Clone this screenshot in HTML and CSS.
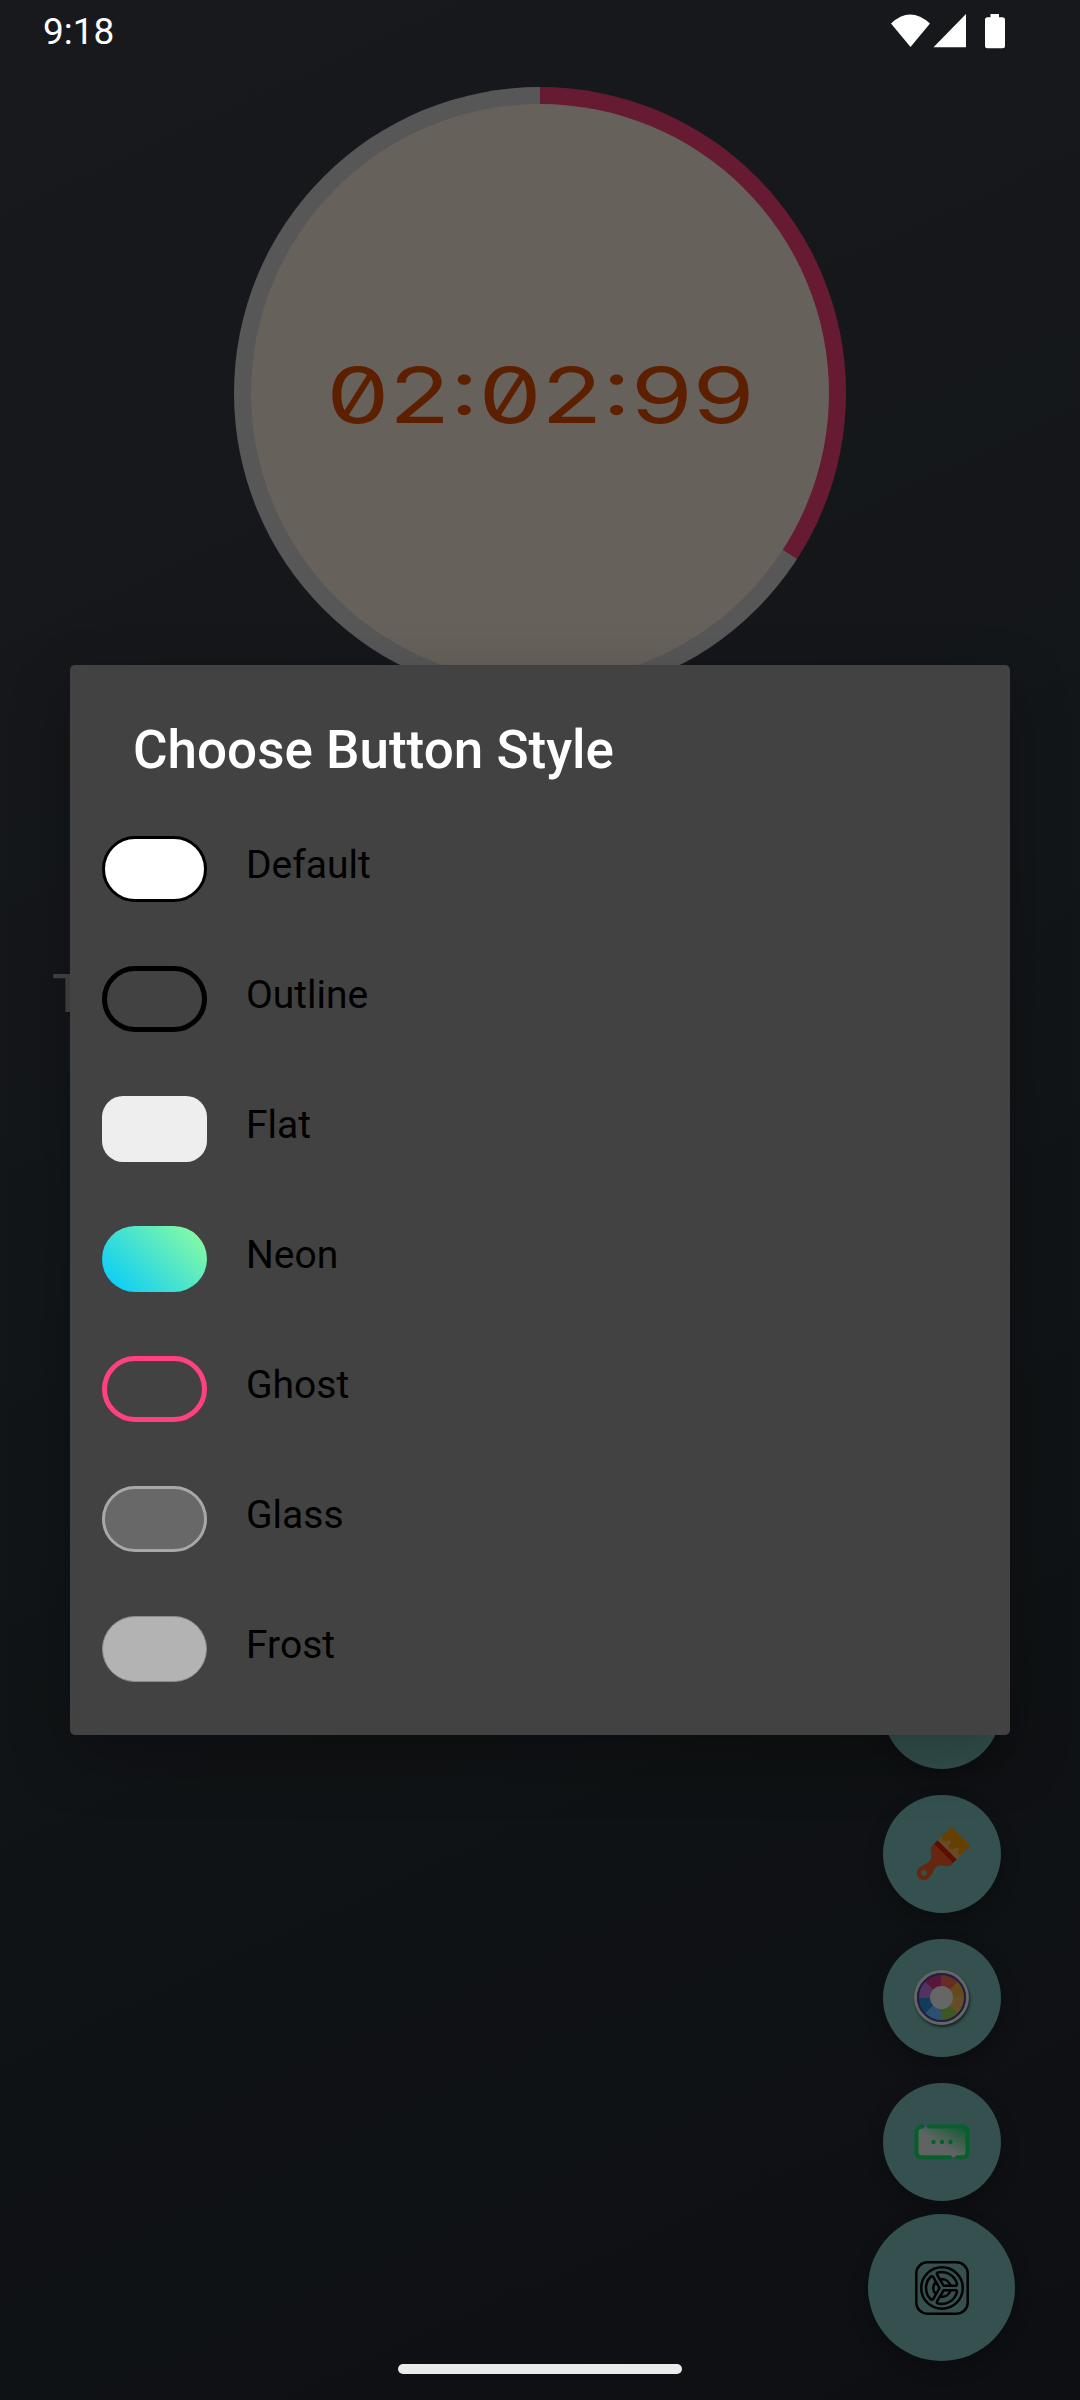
FILE: index.html
```html
<!DOCTYPE html>
<html lang="en">
<head>
<meta charset="utf-8">
<title>Timer</title>
<link rel="stylesheet" href="styles.css">
</head>
<body>
<div class="screen">
  <header class="status">
    <span class="clock">9:18</span>
    <svg class="status-icons" viewBox="0 0 118 36" width="118" height="36">
      <path d="M1 9.500Q20 -8.500 40 9.500L20.500 33Z"/>
      <path d="M43.500 33.200L76 0V33.200Z"/>
      <path d="M100.500 0h8.500v3.200h3.500q2.500 0 2.500 2.500v26q0 2.500-2.500 2.500h-15q-2.500 0-2.500-2.500v-26q0-2.500 2.500-2.500h3z"/>
    </svg>
  </header>
  <main class="content">
    <div class="dial">
      <div class="face"><span class="time">02:02:99</span></div>
    </div>
    <p class="behind">T</p>
  </main>

  <div class="fabs">
    <div class="fab"></div>
    <div class="fab">
      <svg viewBox="0 0 60 60" width="60" height="60">
        <g transform="translate(31 30) rotate(45)">
          <path fill="#66260f" d="M-13.500 -3H13.500V2C13.500 7 5 8 4.500 14C4 19 7 20 7 27C7 31 4 34 0 34S-7 31 -7 27C-7 20 -4 19 -4.500 14C-5 8 -13.500 7 -13.500 2Z"/>
          <circle cx="0" cy="27" r="2.800" fill="#34514f"/>
          <path fill="#5c0e00" d="M-13.500 -6H13.500V-1H-13.500Z"/>
          <path fill="#664b26" d="M-13.500 -18H13.500V-6H-13.500Z"/>
          <path fill="#664000" d="M-13.500 -25H13.500V-12C11 -9 9 -11 8.500 -14C7 -16 5 -15 4.500 -12C3 -7 -2 -8 -2 -12C-3 -16 -5 -15 -6 -13C-8 -8 -13 -9 -13.500 -14Z"/>
        </g>
      </svg>
    </div>
    <div class="fab">
      <div class="wheel"><div class="hub"></div></div>
    </div>
    <div class="fab">
      <svg viewBox="0 0 56 36" width="56" height="36">
        <defs><linearGradient id="card" x1="0" y1="1" x2="1" y2="0"><stop offset=".45" stop-color="#5f6462"/><stop offset="1" stop-color="#0b5a30"/></linearGradient></defs>
        <rect x="3" y="3" width="50" height="30" rx="5" fill="url(#card)"/>
        <path d="M8.500 2.500Q2.500 2.500 2.500 8.500V28Q2.500 33.300 8 33.300H36M43 33.300H48Q53.500 33.300 53.500 28V8Q53.500 2.500 48 2.500H15" fill="none" stroke="#07602b" stroke-width="4" stroke-linecap="round"/>
        <g fill="#07602b"><circle cx="19.500" cy="18" r="2.200"/><circle cx="28" cy="18" r="2.200"/><circle cx="36.500" cy="18" r="2.200"/></g>
      </svg>
    </div>
    <div class="fab fab-main">
      <svg viewBox="0 0 54 54" width="54" height="54" fill="none" stroke="#000" stroke-width="2.500" stroke-linejoin="round">
        <rect x="1.300" y="1.300" width="51.400" height="51.400" rx="11"/>
        <circle cx="27" cy="27" r="20.800"/>
        <path d="M28.500 24.700L22 13.500Q21.500 12 23 11.500C32 9.500 40 15 42 23Q42 24.700 40.500 24.700Z"/>
        <path d="M25 18.500C30 17.500 34 20 35.500 24.700"/>
        <path d="M28.500 29.300L22 40.500Q21.500 42 23 42.500C32 44.500 40 39 42 31Q42 29.300 40.500 29.300Z"/>
        <path d="M25 35.500C30 36.500 34 34 35.500 29.300"/>
        <path d="M24.500 27L18 15.700Q17 14.500 15.500 16C9.500 22 9.500 32 15.500 38Q17 39.500 18 38.300Z"/>
        <path d="M21 21C17.200 24.500 17.200 29.500 21 33"/>
      </svg>
    </div>
  </div>

  <div class="overlay">
    <section class="dialog">
      <h1 class="title">Choose Button Style</h1>
      <ul class="styles">
        <li class="row"><span class="swatch default"></span><span class="label">Default</span></li>
        <li class="row"><span class="swatch outline"></span><span class="label">Outline</span></li>
        <li class="row"><span class="swatch flat"></span><span class="label">Flat</span></li>
        <li class="row"><span class="swatch neon"></span><span class="label">Neon</span></li>
        <li class="row"><span class="swatch ghost"></span><span class="label">Ghost</span></li>
        <li class="row"><span class="swatch glass"></span><span class="label">Glass</span></li>
        <li class="row"><span class="swatch frost"></span><span class="label">Frost</span></li>
      </ul>
    </section>
  </div>
  <div class="handle"></div>
</div>
</body>
</html>
```
FILE: styles.css
```css
* { box-sizing: border-box; }
body { margin: 0; font-family: Roboto, sans-serif; }

.screen {
  position: relative;
  width: 1080px;
  height: 2400px;
  overflow: hidden;
  background: linear-gradient(155deg, #18191d 0%, #131619 45%, #0f1214 75%, #0e0f13 100%);
}

.status {
  display: flex;
  justify-content: space-between;
  align-items: flex-start;
  height: 87px;
  padding: 14px 72px 0 43px;
}
.clock { font-size: 37px; line-height: 35px; color: #fff; }
.status-icons { display: block; fill: #fff; }

.content { display: flex; flex-direction: column; }
.dial {
  align-self: center;
  width: 612px;
  height: 612px;
  padding: 17px;
  border-radius: 50%;
  background: conic-gradient(#661b33 0 122.800deg, #575757 122.900deg 360deg);
}
.face {
  display: flex;
  align-items: center;
  justify-content: center;
  height: 100%;
  border-radius: 50%;
  background: #66615a;
}
.time {
  padding-top: 4px;
  font-family: Inter, sans-serif;
  font-size: 77px;
  font-weight: 400;
  line-height: 80px;
  color: #5c1f00;
  font-feature-settings: "zero";
  white-space: nowrap;
  transform: scaleX(1.293);
}
.behind {
  margin: 264px 0 0 52px;
  font-size: 53px;
  line-height: 62px;
  color: #454545;
}

.fabs {
  position: absolute;
  top: 1651px;
  right: 65px;
  display: flex;
  flex-direction: column;
  align-items: center;
  gap: 26px;
}
.fab {
  display: flex;
  align-items: center;
  justify-content: center;
  width: 118px;
  height: 118px;
  border-radius: 50%;
  background: #34514f;
  box-shadow: 0 8px 18px rgba(0, 0, 0, .25);
}
.fab-main { width: 147px; height: 147px; margin-top: -13px; }
.wheel {
  display: flex;
  align-items: center;
  justify-content: center;
  width: 49px;
  height: 49px;
  margin: 0 1px 1px 0;
  border: 2px solid #221d42;
  border-radius: 50%;
  background: conic-gradient(#662d22 0 45deg, #664a1c 45deg 90deg, #664d28 90deg 135deg, #3e5720 135deg 180deg, #2c5070 180deg 225deg, #123c5b 225deg 270deg, #513260 270deg 315deg, #57183b 315deg);
  box-shadow: 0 0 0 3px #656565, 1px 2px 3px 3px #152321;
}
.hub { width: 23px; height: 23px; border-radius: 50%; background: #666; }

.overlay {
  position: absolute;
  inset: 0;
  display: flex;
  justify-content: center;
  align-items: flex-start;
  padding-top: 665px;
}
.dialog {
  width: 940px;
  height: 1070px;
  padding: 54px 32px 0;
  border-radius: 5px;
  background: #424242;
  box-shadow: 0 22px 60px rgba(0, 0, 0, .28);
}
.title {
  margin: 0 0 23px 31px;
  font-size: 53px;
  font-weight: 500;
  line-height: 62px;
  color: #fff;
}
.styles { margin: 0; padding: 0; list-style: none; }
.row {
  display: flex;
  align-items: center;
  gap: 39px;
  height: 130px;
}
.label {
  padding-bottom: 8px;
  font-size: 39px;
  line-height: 46px;
  color: #000;
}
.swatch { width: 105px; height: 66px; border-radius: 33px; }
.default { background: #fff; border: 3px solid #000; }
.outline { border: 5px solid #000; }
.flat { background: #eee; border-radius: 21px; }
.neon { background: linear-gradient(45deg, #00c9ff, #92fe9d); }
.ghost { border: 5px solid #ff4081; }
.glass { background: #686868; border: 3px solid #a8a8a8; }
.frost { background: #b3b3b3; border: 1.500px solid #8b8b8b; }

.handle {
  position: absolute;
  left: 398px;
  bottom: 26px;
  width: 284px;
  height: 10px;
  border-radius: 5px;
  background: #ebebeb;
}
```
